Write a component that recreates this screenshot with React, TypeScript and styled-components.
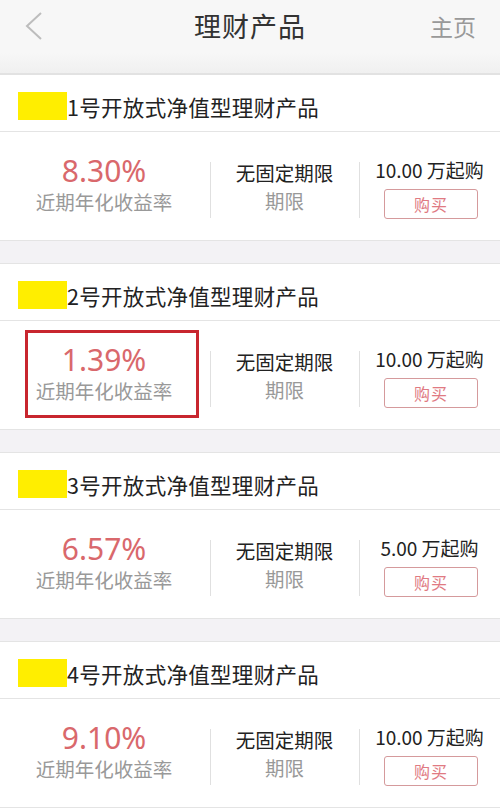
import React from 'react';
import styled, { createGlobalStyle } from 'styled-components';

const GlobalStyle = createGlobalStyle`
	* {
		box-sizing: border-box;
	}
	body {
		margin: 0;
		background: #f3f2f5;
		font-family: 'Noto Sans CJK SC', 'Noto Sans', sans-serif;
	}
`;

const Page = styled.div`
	width: 500px;
	min-height: 808px;
	background: #f3f2f5;
`;

const NavBar = styled.header`
	height: 75px;
	display: grid;
	grid-template-columns: 80px 1fr 80px;
	align-items: start;
	padding-top: 8px;
	background: linear-gradient(#f7f7f7 0%, #f7f7f7 72%, #f0f0f0 100%);
	border-bottom: 2px solid #e2e2e2;
`;

const BackButton = styled.button`
	width: 40px;
	height: 36px;
	margin-left: 14px;
	padding: 0;
	border: none;
	background: transparent;
	display: flex;
	align-items: center;
	justify-content: center;
`;

const Title = styled.h1`
	margin: 0;
	text-align: center;
	font-size: 27px;
	line-height: 36px;
	font-weight: 400;
	color: #333;
	letter-spacing: 1px;
`;

const HomeLink = styled.span`
	text-align: right;
	padding-right: 24px;
	font-size: 23px;
	line-height: 36px;
	color: #999;
`;

const List = styled.main`
	display: flex;
	flex-direction: column;
	gap: 22px;
`;

const Card = styled.section`
	background: #fff;
	border-bottom: 1px solid #e4e4e4;

	& + & {
		border-top: 1px solid #e4e4e4;
	}
`;

const CardHead = styled.div`
	height: 57px;
	display: flex;
	align-items: center;
	padding: 6px 0 0 18px;
	border-bottom: 1px solid #e4e4e4;
`;

const Mask = styled.span`
	width: 49px;
	height: 28px;
	background: #ffee00;
	flex-shrink: 0;
`;

const CardName = styled.span`
	font-size: 21.5px;
	color: #222;
	letter-spacing: 0.3px;
`;

const CardBody = styled.div`
	height: 108px;
	display: grid;
	grid-template-columns: 210px 149px 1fr;
`;

const Cell = styled.div<{ $divider?: boolean }>`
	position: relative;
	display: flex;
	flex-direction: column;
	align-items: center;
	justify-content: center;
	padding-bottom: 5px;

	${(p) =>
		p.$divider &&
		`
		&::before {
			content: '';
			position: absolute;
			left: 0;
			top: 30px;
			height: 56px;
			width: 1px;
			background: #e0e0e0;
		}
	`}
`;

const Frame = styled.div<{ $active?: boolean }>`
	width: 174px;
	height: 88px;
	margin: 3px 0 0 14px;
	padding-right: 16px;
	display: flex;
	flex-direction: column;
	align-items: center;
	justify-content: center;
	border: 3px solid ${(p) => (p.$active ? '#c8262f' : 'transparent')};
`;

const Rate = styled.div`
	font-size: 30px;
	line-height: 34px;
	color: #d9686c;
	font-family: 'Noto Sans', 'Noto Sans CJK SC', sans-serif;
`;

const Label = styled.div`
	font-size: 19.5px;
	line-height: 28px;
	color: #999;
`;

const Value = styled.div`
	font-size: 19.5px;
	line-height: 28px;
	color: #222;
	margin-top: 6px;
`;

const Amount = styled.div`
	font-size: 19px;
	line-height: 26px;
	color: #222;
	margin-top: 8px;
`;

const BuyButton = styled.button`
	width: 94px;
	height: 30px;
	margin: 6px 0 0 3px;
	padding: 0;
	border: 1.5px solid #d59a9c;
	border-radius: 3px;
	background: #fff;
	color: #e07a82;
	font-size: 16px;
	font-family: inherit;
	letter-spacing: 1px;
`;

const products = [
	{ no: 1, rate: '8.30%', min: '10.00 万起购' },
	{ no: 2, rate: '1.39%', min: '10.00 万起购', marked: true },
	{ no: 3, rate: '6.57%', min: '5.00 万起购' },
	{ no: 4, rate: '9.10%', min: '10.00 万起购' },
];

const App: React.FC = () => {
	return (
		<Page>
			<GlobalStyle />
			<NavBar>
				<BackButton type='button'>
					<svg width='18' height='28' viewBox='0 0 18 28'>
						<path
							d='M16 1 L2 14 L16 27'
							fill='none'
							stroke='#bdbdbd'
							strokeWidth='2'
						/>
					</svg>
				</BackButton>
				<Title>理财产品</Title>
				<HomeLink>主页</HomeLink>
			</NavBar>
			<List>
				{products.map((p) => (
					<Card key={p.no}>
						<CardHead>
							<Mask />
							<CardName>{p.no}号开放式净值型理财产品</CardName>
						</CardHead>
						<CardBody>
							<Cell>
								<Frame $active={p.marked}>
									<Rate>{p.rate}</Rate>
									<Label>近期年化收益率</Label>
								</Frame>
							</Cell>
							<Cell $divider>
								<Value>无固定期限</Value>
								<Label>期限</Label>
							</Cell>
							<Cell $divider>
								<Amount>{p.min}</Amount>
								<BuyButton type='button'>购买</BuyButton>
							</Cell>
						</CardBody>
					</Card>
				))}
			</List>
		</Page>
	);
};

export default App;
